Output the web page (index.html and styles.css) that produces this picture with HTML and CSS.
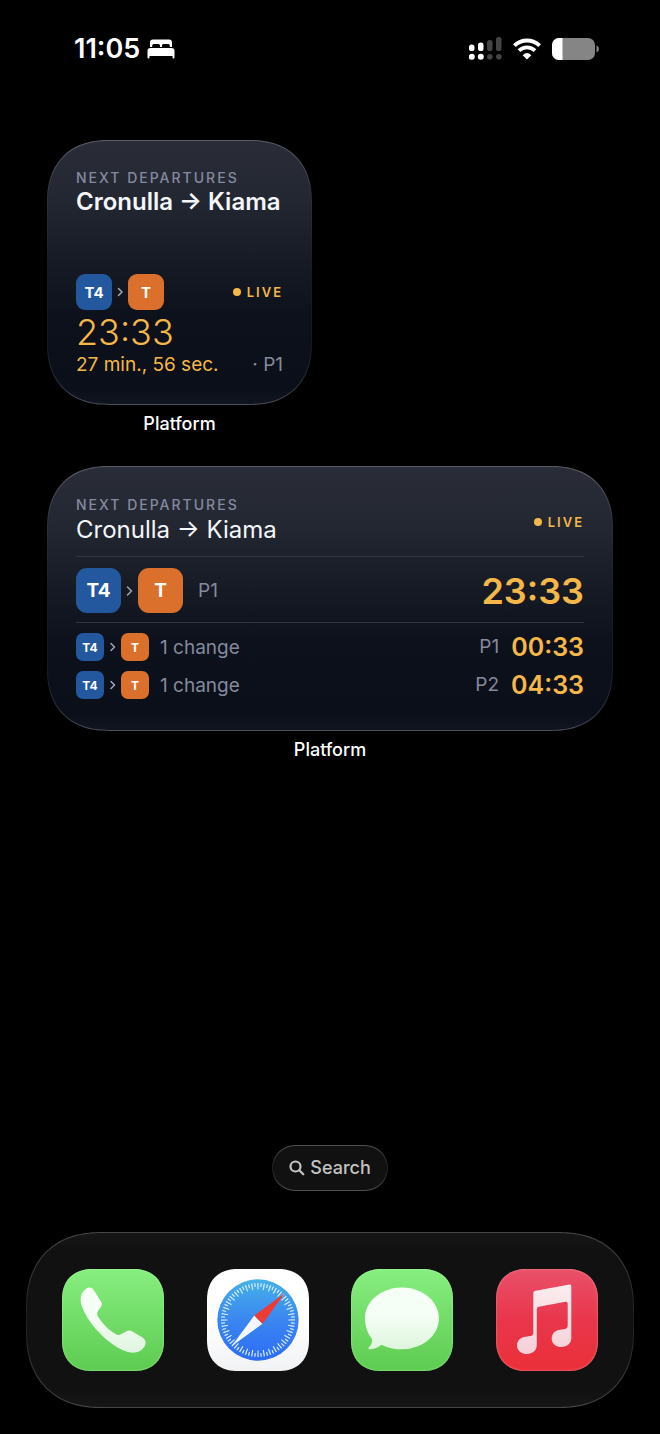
FILE: index.html
```html
<!DOCTYPE html>
<html lang="en">
<head>
<meta charset="utf-8">
<meta name="viewport" content="width=device-width, initial-scale=1">
<title>Home Screen</title>
<link rel="stylesheet" href="styles.css">
</head>
<body>
<div class="screen">
  <header class="status">
    <div class="status-group">
      <time class="clock">11:05</time>
      <svg class="bed" width="28" height="20" viewBox="0 0 28 20" fill="#fff" role="img" aria-label="Sleep focus">
        <path d="M3 8V3.5Q3 .5 6 .5H22Q25 .5 25 3.5V8H22.800V6.500Q22.800 5 21.300 5H16.500Q15 5 15 6.500V8H13V6.500Q13 5 11.500 5H6.700Q5.200 5 5.200 6.500V8Z"/>
        <path d="M.5 12Q.5 9 3.500 9H24.500Q27.500 9 27.500 12V18.500Q27.500 19.500 26.500 19.500T25.500 18.500V17H2.500V18.500Q2.500 19.500 1.500 19.500T.5 18.500Z"/>
      </svg>
    </div>
    <div class="status-group status-right">
      <svg width="33" height="24" viewBox="0 0 33 24" fill="#fff" role="img" aria-label="Dual signal">
        <rect x="0" y="7.500" width="5.500" height="6.500" rx="2.600"/>
        <rect x="9" y="5.500" width="5.500" height="8.500" rx="2.600"/>
        <circle cx="2.800" cy="19.800" r="3"/><circle cx="11.800" cy="19.800" r="3"/>
        <g fill="#444"><rect x="18" y="3" width="5.500" height="11" rx="2.600"/><rect x="27" y="0" width="5.500" height="14" rx="2.600"/>
        <circle cx="20.800" cy="19.800" r="2.800"/><circle cx="29.800" cy="19.800" r="2.800"/></g>
      </svg>
      <svg width="28" height="22" viewBox="0 0 28 22" fill="none" stroke="#fff" stroke-width="3.900" role="img" aria-label="Wi-Fi">
        <path d="M1.400 7.600A18 18 0 0 1 26.600 7.600"/>
        <path d="M6 12.600A11.500 11.500 0 0 1 22 12.600"/>
        <path d="M14 21.500L9.700 17.200Q14 12.600 18.300 17.200Z" fill="#fff" stroke="none"/>
      </svg>
      <svg width="48" height="22" viewBox="0 0 48 22" role="img" aria-label="Battery low">
        <clipPath id="battery"><rect width="43" height="22" rx="7"/></clipPath>
        <g clip-path="url(#battery)"><rect width="43" height="22" fill="#858585"/><rect width="10.500" height="22" fill="#fff"/></g>
        <path d="M44.500 7.500Q47 8.300 47 11T44.500 14.500Z" fill="#858585"/>
      </svg>
    </div>
  </header>

  <main class="home">
    <figure class="slot slot-small">
      <article class="widget widget-small">
        <div class="heading">
          <p class="eyebrow">NEXT DEPARTURES</p>
          <h2 class="route route-strong">Cronulla → Kiama</h2>
        </div>
        <div class="next">
          <div class="line">
            <div class="legs legs-medium">
              <span class="badge blue">T4</span>
              <svg class="chevron" viewBox="0 0 8 12"><path d="M2.500 2.500L6 6L2.500 9.500"/></svg>
              <span class="badge orange">T</span>
            </div>
            <span class="live">LIVE</span>
          </div>
          <time class="hero-light">23:33</time>
          <div class="line countdown"><span class="amber">27 min., 56 sec.</span><span class="muted">· P1</span></div>
        </div>
      </article>
      <figcaption class="caption">Platform</figcaption>
    </figure>

    <figure class="slot">
      <article class="widget widget-wide">
        <div class="line">
          <div class="heading">
            <p class="eyebrow">NEXT DEPARTURES</p>
            <h2 class="route">Cronulla → Kiama</h2>
          </div>
          <span class="live">LIVE</span>
        </div>
        <div class="line feature">
          <div class="legs legs-large">
            <span class="badge blue">T4</span>
            <svg class="chevron" viewBox="0 0 8 12"><path d="M2 2L6 6L2 10"/></svg>
            <span class="badge orange">T</span>
            <span class="muted platform">P1</span>
          </div>
          <time class="hero-bold">23:33</time>
        </div>
        <ul class="later">
          <li class="line">
            <div class="legs legs-small">
              <span class="badge blue">T4</span>
              <svg class="chevron" viewBox="0 0 8 12"><path d="M2.500 2.500L6 6L2.500 9.500"/></svg>
              <span class="badge orange">T</span>
              <span class="muted changes">1 change</span>
            </div>
            <div class="arrival"><span class="muted">P1</span><time>00:33</time></div>
          </li>
          <li class="line">
            <div class="legs legs-small">
              <span class="badge blue">T4</span>
              <svg class="chevron" viewBox="0 0 8 12"><path d="M2.500 2.500L6 6L2.500 9.500"/></svg>
              <span class="badge orange">T</span>
              <span class="muted changes">1 change</span>
            </div>
            <div class="arrival"><span class="muted">P2</span><time>04:33</time></div>
          </li>
        </ul>
      </article>
      <figcaption class="caption">Platform</figcaption>
    </figure>
  </main>

  <button class="search" type="button">
    <svg width="16" height="16" viewBox="0 0 16 16" fill="none" stroke="#c4c4c4" stroke-width="2.200" stroke-linecap="round" aria-hidden="true"><circle cx="6.500" cy="6.500" r="5"/><path d="M10.300 10.300L14.300 14.300"/></svg>
    Search
  </button>

  <nav class="dock" aria-label="Dock">
    <a class="app green" href="#phone" aria-label="Phone">
      <svg viewBox="0 0 102 102">
        <defs><linearGradient id="glyph" x1="0" y1="0" x2="0" y2="1"><stop offset="0.400" stop-color="#f6fff6"/><stop offset="1" stop-color="#dff5de"/></linearGradient></defs>
        <path fill="url(#glyph)" d="M23 20.500C27 17.500 30 18 32 21.500L39 32.500C40.300 35 40 36.500 38.500 38.500L36 42C34.700 44 35 46 36.200 48C41 55 46 60.500 53.500 65C55.500 66.300 57.500 66.200 59.300 65L64.500 62.200C66.500 61 68 61.200 70 62.300L80.500 68.500C84 71 84.500 74 82.500 77.500C79 83 73 85 66 83C46 77 24.500 53 19.300 35.500C17.800 29 19 24 23 20.500Z"/>
      </svg>
    </a>
    <a class="app white" href="#safari" aria-label="Safari">
      <svg viewBox="0 0 102 102">
        <defs><linearGradient id="sky" x1="0" y1="0" x2="0" y2="1"><stop offset="0" stop-color="#45b2e8"/><stop offset="0.500" stop-color="#3b86f0"/><stop offset="1" stop-color="#2c6cf6"/></linearGradient></defs>
        <circle cx="51" cy="51" r="40.700" fill="url(#sky)"/>
        <g fill="none" stroke="#d9eeff" transform="rotate(-1 51 51)">
          <circle cx="51" cy="51" r="33.700" stroke-width="6.500" pathLength="360" stroke-dasharray="2 8"/>
          <circle cx="51" cy="51" r="35" stroke-width="3.800" pathLength="360" stroke-dasharray="2 8" stroke-dashoffset="-5"/>
        </g>
        <path d="M24.300 77.500L47.300 46.500L55.500 54.700Z" fill="#f5f8fc"/>
        <path d="M77.700 24.300L47.300 46.500L55.500 54.700Z" fill="#ee3a30"/>
      </svg>
    </a>
    <a class="app green" href="#messages" aria-label="Messages">
      <svg viewBox="0 0 102 102">
        <path fill="url(#glyph)" d="M51 18.500C71.500 18.500 88 32 88 49.300S71.500 80.300 51 80.300C44.500 80.300 38 79 32 76.400C30.800 75.900 30 76 29 76.800C26 79.200 22 80.300 18.500 80.200C17.200 80.100 17 79.200 17.800 78.400C20.800 75.500 21.700 72.500 20.800 69.700C16.300 64 14 57 14 49.300C14 32 30.500 18.500 51 18.500Z"/>
      </svg>
    </a>
    <a class="app red" href="#music" aria-label="Music">
      <svg viewBox="0 0 102 102">
        <defs><linearGradient id="note" x1="0" y1="0" x2="0" y2="1"><stop offset="0" stop-color="#fcecee"/><stop offset="1" stop-color="#f6d0d8"/></linearGradient></defs>
        <path fill="url(#note)" d="M39.500 21.700L73.500 15.500Q75.300 15.300 75.300 17.200V69C75.300 74.500 71 78 65.500 78S55.700 74.500 55.700 69.700C55.700 64.500 59 61.500 64 60.800L69 60Q71.700 59.500 71.700 57V34.500Q71.700 32.300 69.500 32.700L42.700 37.700Q40.800 38.100 40.800 40V75.500C40.800 81.500 36.500 85 31 85S21 81.500 21 76.700C21 71.500 24.500 68.500 29.500 67.800L34.500 67Q37.300 66.500 37.300 64V24Q37.300 22.100 39.500 21.700Z"/>
      </svg>
    </a>
  </nav>
</div>
</body>
</html>
```
FILE: styles.css
```css
* { box-sizing: border-box; }

body {
  margin: 0;
  background: #000;
  color: #fff;
  font-family: Inter, "Liberation Sans", sans-serif;
}

p, h2, ul, figure { margin: 0; padding: 0; }
ul { list-style: none; }
svg { display: block; flex: none; }

.screen {
  min-height: 100vh;
  display: flex;
  flex-direction: column;
  padding-bottom: 26px;
}

/* Status bar */
.status {
  display: flex;
  justify-content: space-between;
  align-items: center;
  height: 98px;
  padding: 0 60px 0 74px;
}
.status-group { display: flex; align-items: center; gap: 7px; }
.status-right { gap: 11px; }
.clock { font-size: 27px; font-weight: 600; line-height: 32px; }

/* Widgets */
.home { padding: 42px 47px 0; }
.slot-small { width: 265px; }
.slot + .slot { margin-top: 31px; }

.widget {
  min-height: 265px;
  display: flex;
  flex-direction: column;
  border: 1px solid transparent;
  border-radius: 56px;
  background:
    linear-gradient(#2a2d37 0%, #232731 22%, #161a24 47%, #0c111c 67%, #0a0f1a 94%, #11151f 100%) padding-box,
    linear-gradient(#5a5d68 0%, #2f323c 20%, #161a24 50%, #141822 75%, #2b2f39 92%, #4b4e59 100%) border-box;
}
.widget-small { justify-content: space-between; padding: 29px 28px 28px; }
.widget-wide { padding: 30px 28px; }

.line { display: flex; justify-content: space-between; align-items: center; }
.eyebrow {
  color: #8589a0;
  font-size: 14px;
  font-weight: 500;
  line-height: 16px;
  letter-spacing: 2px;
}
.route { color: #f4f6fa; font-size: 24px; font-weight: 400; line-height: 34px; white-space: nowrap; }
.route-strong { font-weight: 600; line-height: 32px; }

.live {
  display: flex;
  align-items: center;
  gap: 6px;
  color: #f6b749;
  font-size: 13px;
  font-weight: 600;
  letter-spacing: 2px;
}
.live::before { content: ""; width: 8px; height: 8px; border-radius: 50%; background: currentColor; }

.legs { display: flex; align-items: center; gap: 4px; }
.badge {
  display: grid;
  place-items: center;
  width: 28px;
  height: 28px;
  border-radius: 7px;
  color: #fff;
  font-size: 12px;
  font-weight: 700;
}
.blue { background: #24589e; }
.orange { background: #db702c; }
.legs-medium .badge { width: 36px; height: 36px; border-radius: 9px; font-size: 15px; }
.legs-large .badge { width: 45px; height: 45px; border-radius: 11px; font-size: 19px; }
.chevron {
  width: 9px;
  height: 12px;
  fill: none;
  stroke: #a3a7b5;
  stroke-width: 1.5;
  stroke-linecap: round;
  stroke-linejoin: round;
}
.legs-medium .chevron { width: 8px; }

.muted { color: #858a9b; font-size: 19px; }
.amber, .arrival time, .hero-light, .hero-bold { color: #f6b749; }
.hero-light { display: block; font-size: 36px; font-weight: 300; line-height: 44px; }
.hero-bold { font-size: 36px; font-weight: 600; line-height: 44px; }
.countdown { font-size: 19px; line-height: 22px; white-space: nowrap; }

.feature {
  margin: 9px 0 10px;
  padding: 11px 0 9px;
  border: solid #30343e;
  border-width: 1px 0;
}
.platform { margin-left: 11px; }
.changes { margin-left: 7px; }
.later { display: grid; gap: 10px; }
.arrival { display: flex; align-items: center; gap: 12px; line-height: 28px; }
.arrival time { font-size: 25px; font-weight: 600; }

.caption { padding-top: 8px; text-align: center; font-size: 18px; font-weight: 500; line-height: 22px; }

/* Search and dock */
.search {
  display: flex;
  align-items: center;
  gap: 5px;
  height: 46px;
  margin: auto auto 41px;
  padding: 0 16px;
  border: 1px solid transparent;
  border-radius: 23px;
  background:
    linear-gradient(#111, #111) padding-box,
    linear-gradient(#505050, #1c1c1c 50%, #505050) border-box;
  color: #c4c4c4;
  font: 500 18px/22px Inter, "Liberation Sans", sans-serif;
}

.dock {
  display: flex;
  justify-content: space-between;
  margin: 0 26px;
  padding: 36px 35px;
  border: 1px solid transparent;
  border-radius: 66px;
  background:
    linear-gradient(#161616, #111 10%, #111 90%, #161616) padding-box,
    linear-gradient(#484848, #1e1e1e 50%, #484848) border-box;
}
.app { width: 102px; height: 102px; border-radius: 27px; overflow: hidden; }
.app svg { width: 100%; height: 100%; }
.green { background: linear-gradient(#87ee80, #5dcb50); box-shadow: inset 0 0 2px #b0ffa8; }
.white { background: linear-gradient(#fff 50%, #f1f2f4); }
.red { background: linear-gradient(#e9506a, #e9364c 50%, #ea3038); box-shadow: inset 0 0 2px #ff9aac; }

@supports (corner-shape: superellipse(1.2)) {
  .widget { border-radius: 62px; corner-shape: superellipse(1.2); }
  .dock { border-radius: 76px; corner-shape: superellipse(1.2); }
  .app { border-radius: 31px; corner-shape: superellipse(1.2); }
}
```
